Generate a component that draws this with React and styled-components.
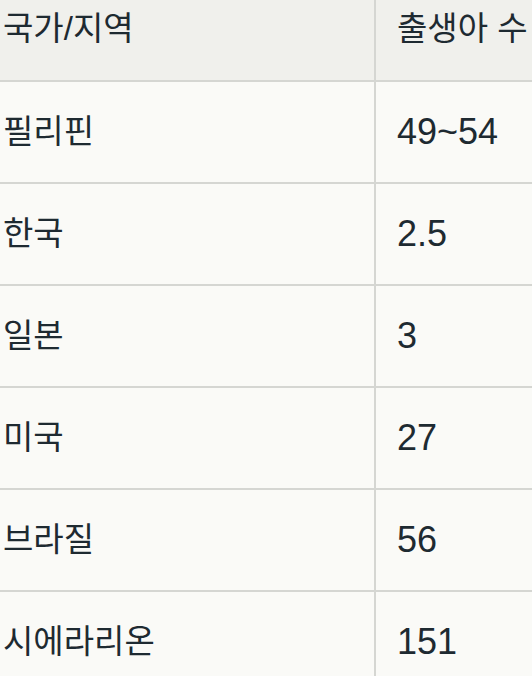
import React from "react";
import styled, { createGlobalStyle } from "styled-components";

const GlobalStyle = createGlobalStyle`
    html, body {
        margin: 0;
        padding: 0;
        background: #fafaf7;
        overflow: hidden;
    }
    body {
        font-family: "Liberation Sans", "Noto Sans CJK KR", sans-serif;
        color: #1e2a31;
    }
`;

const Viewport = styled.div`
    width: 532px;
    height: 676px;
    overflow: hidden;
`;

const Table = styled.table`
    border-collapse: collapse;
    margin: -22px 0 0 -20px;
    width: 700px;
    table-layout: fixed;
`;

const HeadCell = styled.th`
    background: #f0f0ec;
    font-weight: 400;
    text-align: left;
    font-size: 33px;
    line-height: 50px;
    padding: 26px 21px;
    border: 2px solid #d5d6d2;
    border-top: none;
    width: ${(p) => (p.$width ? `${p.$width}px` : "auto")};
    white-space: nowrap;
`;

const Cell = styled.td`
    background: #fafaf7;
    font-size: ${(p) => (p.$num ? "36px" : "33px")};
    line-height: 50px;
    padding: 25px 21px;
    border: 2px solid #d5d6d2;
    white-space: nowrap;
`;

const rows = [
    ["필리핀", "49~54"],
    ["한국", "2.5"],
    ["일본", "3"],
    ["미국", "27"],
    ["브라질", "56"],
    ["시에라리온", "151"],
];

export default function App() {
    return (
        <Viewport>
            <GlobalStyle />
            <Table>
                <thead>
                    <tr>
                        <HeadCell $width={350}>국가/지역</HeadCell>
                        <HeadCell>출생아 수</HeadCell>
                    </tr>
                </thead>
                <tbody>
                    {rows.map(([country, births]) => (
                        <tr key={country}>
                            <Cell>{country}</Cell>
                            <Cell $num>{births}</Cell>
                        </tr>
                    ))}
                </tbody>
            </Table>
        </Viewport>
    );
}
